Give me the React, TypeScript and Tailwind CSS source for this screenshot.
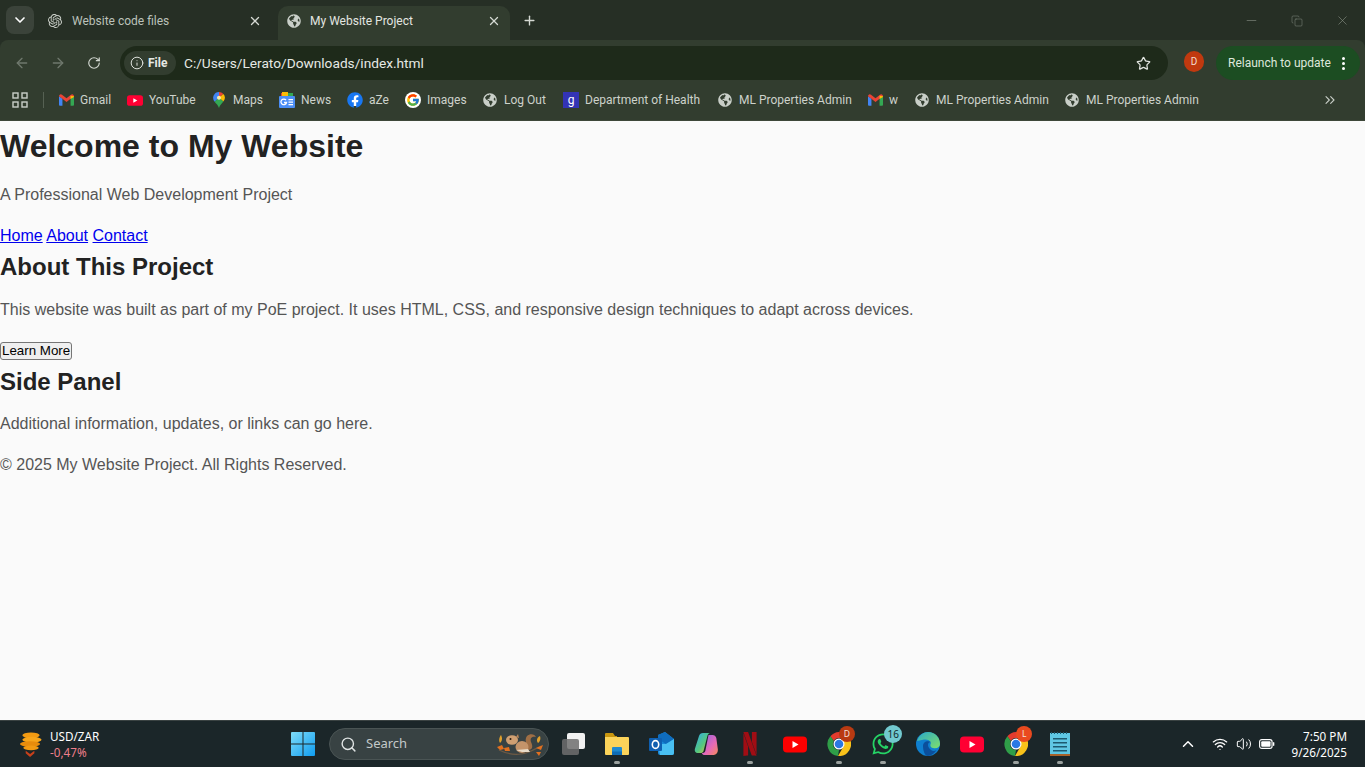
import { ArrowLeft, ArrowRight, ChevronDown, ChevronUp, ChevronsRight, Copy, Info, Minus, Plus, RotateCw, Search, Star, Volume2, Wifi, X } from 'lucide-react'
import { FaFacebook, FaGlobeAmericas, FaWhatsapp } from 'react-icons/fa'
import { FcGoogle } from 'react-icons/fc'
import { SiNetflix, SiOpenai } from 'react-icons/si'

const uiFont = "font-['Roboto',sans-serif]"

function GmailIcon() {
    return (
        <svg viewBox="0 0 24 18" className="h-[12px] w-[15px]">
            <path d="M0 3v13.500A1.500 1.500 0 0 0 1.500 18H5.500V7z" fill="#4285f4" />
            <path d="M24 3v13.500a1.500 1.500 0 0 1-1.500 1.500H18.500V7z" fill="#34a853" />
            <path d="M0 3a3 3 0 0 1 4.800-2.400L12 6l7.200-5.400A3 3 0 0 1 24 3l-5.500 4L12 12 5.500 7z" fill="#ea4335" />
            <path d="M18.500 2 24 3v1l-5.500 3.500z" fill="#fbbc04" />
        </svg>
    )
}

function YoutubeIcon({ w = 16, h = 11, color = '#ff0033' }: { w?: number; h?: number; color?: string }) {
    return (
        <svg width={w} height={h} viewBox="0 0 24 16">
            <rect width="24" height="16" rx="4" fill={color} />
            <path d="M9.500 4.500v7l6-3.500z" fill="#fff" />
        </svg>
    )
}

function MapsIcon() {
    return (
        <svg viewBox="0 0 16 22" className="h-[16px] w-[12px]">
            <path d="M8 0a8 8 0 0 0-6 13.300L8 8z" fill="#4285f4" />
            <path d="M8 0a8 8 0 0 1 6 2.700L8 8z" fill="#ea4335" />
            <path d="M14 2.700A8 8 0 0 1 14 13L8 8z" fill="#fbbc04" />
            <path d="M2 13.300 8 8l6 5c-2 3-5 5-6 9-1-4-4-6-6-8.700z" fill="#34a853" />
            <circle cx="8" cy="8" r="2.800" fill="#fbe9a8" />
        </svg>
    )
}

function NewsIcon() {
    return (
        <svg viewBox="0 0 16 16" className="size-4">
            <path d="M2 1h12v4H2z" fill="#ea4335" />
            <path d="M8 1h6v4H8z" fill="#34a853" />
            <path d="M3 0h6v4H3z" fill="#fbbc04" />
            <rect y="4" width="16" height="12" rx="1" fill="#4b8ef5" />
            <path d="M9.500 7H14v1.300H9.500zM9.500 9.500H14v1.300H9.500zM9.500 12H14v1.300H9.500z" fill="#fff" />
            <path d="M7 8.200A2.800 2.800 0 1 0 7.500 10.500H5" fill="none" stroke="#fff" strokeWidth="1.300" />
        </svg>
    )
}

function HealthIcon() {
    return (
        <span className="flex size-4 items-center justify-center bg-[#3333b5] text-[12px] leading-none text-white">g</span>
    )
}

function Globe() {
    return <FaGlobeAmericas className="size-[14px] text-[#c9cfc8]" />
}

function Bookmark({ icon, label, width }: { icon: React.ReactNode; label: string; width: number }) {
    return (
        <div className="flex h-4 items-center gap-1.5">
            <span className="flex size-4 items-center justify-center">{icon}</span>
            <span className="whitespace-nowrap text-[12px] leading-4 text-[#cdd2cb]" style={{ width }}>{label}</span>
        </div>
    )
}

function Tab({ active, icon, title }: { active?: boolean; icon: React.ReactNode; title: string }) {
    return (
        <div className={`flex h-[34px] items-center rounded-t-[10px] pb-[5px] ${active ? 'w-[232px] bg-[#323d2f] pr-[9px] pl-[8px] text-[#e3e6e1]' : 'w-[236px] pr-[10px] pl-[11px] text-[#bcc2ba]'}`}>
            <span className="flex size-4 items-center justify-center">{icon}</span>
            <span className={`flex-1 whitespace-nowrap text-[12px] ${active ? 'ml-[8px]' : 'ml-[9px]'}`}>{title}</span>
            <X className="size-[14px] text-[#d5d9d3]" strokeWidth={2.2} />
        </div>
    )
}

function ChromeIcon({ badge, badgeColor }: { badge: string; badgeColor: string }) {
    return (
        <span className="relative block size-6">
            <svg viewBox="0 0 24 24" className="size-6">
                <path d="M12 0a12 12 0 0 1 10.400 6H12a6 6 0 0 0-5.200 3L3.400 4.200A12 12 0 0 1 12 0z" fill="#e33b2e" />
                <path d="M22.400 6A12 12 0 0 1 11 24l5.200-9a6 6 0 0 0 0-6z" fill="#f9c21a" />
                <path d="M11 24A12 12 0 0 1 3.400 4.200L6.800 9a6 6 0 0 0 5.200 9z" fill="#2f9e48" />
                <circle cx="12" cy="12" r="5.500" fill="#fff" />
                <circle cx="12" cy="12" r="4.300" fill="#2b78e4" />
            </svg>
            <span className="absolute -top-[6px] -right-[4px] flex size-[16px] items-center justify-center rounded-full text-[8.500px] text-[#f4e3dc]" style={{ backgroundColor: badgeColor }}>{badge}</span>
        </span>
    )
}

function FolderIcon() {
    return (
        <svg viewBox="0 0 24 24" className="size-6">
            <path d="M0 2a1 1 0 0 1 1-1h7l2 3h2v3H0z" fill="#c9960f" />
            <path d="M0 5h23a1 1 0 0 1 1 1v16a1 1 0 0 1-1 1H1a1 1 0 0 1-1-1z" fill="#fbd35a" />
            <path d="M7 16a1 1 0 0 1 1-1h8a1 1 0 0 1 1 1v7H7z" fill="#1f8ad0" />
            <path d="M7 19.500h10V23H7z" fill="#0f6cb5" />
        </svg>
    )
}

function OutlookIcon() {
    return (
        <svg viewBox="0 0 26 24" className="h-[24px] w-[26px]">
            <path d="M9 3l7-3 9 7v14a2 2 0 0 1-2 2H11a2 2 0 0 1-2-2z" fill="#1a8ad8" />
            <path d="M16 0l9 7-8 5-8-5V3z" fill="#0f6cbd" />
            <path d="M9 12l8 0 8-5v14a2 2 0 0 1-2 2H11z" fill="#49c0f2" />
            <rect y="6" width="13" height="13" rx="1" fill="#0f5fb0" />
            <ellipse cx="6.500" cy="12.500" rx="3.200" ry="3.900" fill="none" stroke="#fff" strokeWidth="1.600" />
        </svg>
    )
}

function CopilotIcon() {
    return (
        <svg viewBox="0 0 24 24" className="size-6">
            <defs>
                <linearGradient id="cp1" x1="0" y1="0" x2="1" y2="1">
                    <stop offset="0" stopColor="#2fa9ee" />
                    <stop offset="0.55" stopColor="#55c77e" />
                    <stop offset="1" stopColor="#f7c63a" />
                </linearGradient>
                <linearGradient id="cp2" x1="0" y1="0" x2="1" y2="1">
                    <stop offset="0" stopColor="#8a63e8" />
                    <stop offset="0.6" stopColor="#e86ab5" />
                    <stop offset="1" stopColor="#f58a5a" />
                </linearGradient>
            </defs>
            <path d="M14.500 3h4c2 0 3.200 1 3.800 3l1.500 11c.5 3.500-1.500 6-4 6h-9c-1.500 0-2.500-.6-3-2 2 0 3-.5 3.500-2z" fill="url(#cp2)" />
            <path d="M9 1h7c-1 0-2 1-2.500 2.500L9.500 19c-.5 1.500-1.500 2-3 2H4c-2.500 0-3.800-2-3-4.500L5 4c.6-2 2-3 4-3z" fill="url(#cp1)" />
        </svg>
    )
}

function EdgeIcon() {
    return (
        <svg viewBox="0 0 24 24" className="size-6">
            <defs>
                <linearGradient id="ed1" x1="0" y1="0" x2="1" y2="1">
                    <stop offset="0" stopColor="#2aa8c8" />
                    <stop offset="1" stopColor="#7fe06a" />
                </linearGradient>
            </defs>
            <circle cx="12" cy="12" r="12" fill="#0f7fcf" />
            <path d="M1 9C3 3 8 0 12 0c7 0 12 5 12 12 0 3-3 5-7 4-3-.7-3-3-2-5-1-3-4-4-7-3.500C5 8 2 9 1 9z" fill="url(#ed1)" />
            <path d="M7 14c0-4 4-6 8-4-4 0-4 5 0 8 2 1.500 4 1 5.500 0A12 12 0 0 1 12 24c-3 0-5-5-5-10z" fill="#0b4f9c" />
        </svg>
    )
}

function NotepadIcon() {
    return (
        <svg viewBox="0 0 20 24" className="h-6 w-5">
            <rect y="1" width="20" height="21" fill="#5fc7e4" />
            <rect y="22" width="20" height="2" fill="#a8622a" />
            <path d="M1 0h1v2H1zM4 0h1v2H4zM7 0h1v2H7zM10 0h1v2h-1zM13 0h1v2h-1zM16 0h1v2h-1z" fill="#1d5a70" />
            <path d="M3 6h14v1.500H3zM3 10h14v1.500H3zM3 14h14v1.500H3zM3 18h14v1.500H3z" fill="#1d5a70" />
        </svg>
    )
}

function TaskIcon({ children, running }: { children: React.ReactNode; running?: boolean }) {
    return (
        <div className="relative flex h-[47px] w-[44.3px] shrink-0 items-center justify-center">
            {children}
            {running && <span className="absolute bottom-[4px] left-1/2 h-[3px] w-[6px] -translate-x-1/2 rounded-full bg-[#9aa09e]" />}
        </div>
    )
}

function SquirrelArt() {
    return (
        <svg viewBox="0 0 50 26" className="h-[26px] w-[50px]">
            <path d="M4 19c8 4 14 5 22 4 8-1 14-5 20-8" fill="none" stroke="#6e5a44" strokeWidth="1.200" />
            <path d="M33 19c5 0 5-4 3-8-1-3 0-6 5-5-1-3-6-4-9-1-3 4 0 9 0 14z" fill="#a06f45" />
            <ellipse cx="27" cy="16" rx="6.500" ry="6" fill="#c4946a" />
            <path d="M21 19l6 2 8 0-2-3z" fill="#e9dcc9" />
            <ellipse cx="17" cy="9" rx="6" ry="4.800" fill="#cf9f72" />
            <circle cx="15.500" cy="8" r="1" fill="#2a1b10" />
            <path d="M21 6l2-3 1 4z" fill="#b98558" />
            <path d="M5 12c-2-3 0-7 1-8 1 2 2 5-1 8zM43 12c-2-2-1-6 2-7 1 3 0 6-2 7z" fill="#e0a02c" />
            <path d="M2 16l5-2 2 4-4 1zM9 17l5-1 1 4-5 0zM41 17l7-3-2 5zM41 21l5 0-2 4z" fill="#e2701f" />
        </svg>
    )
}

function CurrencyIcon() {
    return (
        <svg viewBox="0 0 24 26" className="h-[25px] w-[24px]">
            <ellipse cx="12" cy="3.500" rx="9" ry="3" fill="#f29a12" />
            <ellipse cx="13" cy="8" rx="10" ry="3" fill="#f7a51b" />
            <ellipse cx="11" cy="12.500" rx="10.500" ry="3" fill="#e88c0c" />
            <ellipse cx="12" cy="16.500" rx="8" ry="2.500" fill="#f29a12" />
            <path d="M6.500 19.500 11 23l4.500-3.500v2.500L11 26l-4.500-4z" fill="#c8401a" />
        </svg>
    )
}

function TabStrip() {
    return (
        <div className="flex h-10 shrink-0 items-end bg-[#262f25]">
            <div className="mb-1.5 ml-1.5 flex size-7 items-center justify-center rounded-lg bg-[#3b433a]">
                <ChevronDown className="size-4 text-white" strokeWidth={2.5} />
            </div>
            <div className="ml-[2px]">
                <Tab icon={<SiOpenai className="size-[14px] text-[#cdd2cb]" />} title="Website code files" />
            </div>
            <div className="ml-[6px]">
                <Tab active icon={<Globe />} title="My Website Project" />
            </div>
            <Plus className="mb-[12px] ml-[12px] size-[15px] text-[#d5d9d3]" strokeWidth={2.2} />
            <div className="mb-3 ml-auto flex items-center gap-[32px] pr-[15px] text-[#868e84]">
                <Minus className="size-[15px]" strokeWidth={1} />
                <Copy className="size-[12px]" strokeWidth={1} />
                <X className="size-[15px]" strokeWidth={1} />
            </div>
        </div>
    )
}

function Toolbar() {
    return (
        <div className="flex h-10 shrink-0 items-end rounded-t-lg bg-[#323d2f]">
            <div className="flex h-[34px] w-[120px] items-center pl-[14px]">
                <ArrowLeft className="size-4 text-[#6f786d]" strokeWidth={2} />
                <ArrowRight className="ml-[20px] size-4 text-[#6f786d]" strokeWidth={2} />
                <RotateCw className="ml-[21px] size-[14px] text-[#d3d8d1]" strokeWidth={2} />
            </div>
            <div className="flex h-[34px] w-[1048px] items-center rounded-full bg-[#1e2a1a] pr-[16px] pl-1">
                <div className="flex h-6 w-[52px] items-center gap-1 rounded-full bg-[#323d2f] pl-[6px]">
                    <Info className="size-[14px] text-[#dfe3dd]" strokeWidth={1.7} />
                    <span className="text-[12px] font-bold text-[#e6e9e4]">File</span>
                </div>
                <span className="ml-2 flex-1 text-[13.700px] text-[#e6e9e4]">C:/Users/Lerato/Downloads/index.html</span>
                <Star className="mr-px size-[15px] text-[#e1e4df]" strokeWidth={2} />
            </div>
            <div className="mb-[8px] ml-[16px] flex h-[21px] w-5 items-center justify-center rounded-full bg-[#c0390f] text-[10px] text-[#f3ddd2]">D</div>
            <div className="ml-[12px] flex h-[34px] w-[144px] items-center rounded-full bg-[#1c4d22] pl-3 text-[12px] whitespace-nowrap text-[#dfe8dc]">
                Relaunch to update
                <span className="ml-[11px] flex flex-col gap-[2px]">
                    <span className="size-[3px] rounded-full bg-white" />
                    <span className="size-[3px] rounded-full bg-white" />
                    <span className="size-[3px] rounded-full bg-white" />
                </span>
            </div>
        </div>
    )
}

function BookmarksBar() {
    return (
        <div className="flex h-[41px] shrink-0 items-center border-b border-[#3d4739] bg-[#323d2f] pl-3">
            <svg viewBox="0 0 16 16" className="size-4 text-[#c9cfc8]" fill="none" stroke="currentColor" strokeWidth="1.400">
                <rect x="1" y="1" width="5" height="5" />
                <rect x="10" y="1" width="5" height="5" />
                <rect x="1" y="10" width="5" height="5" />
                <rect x="10" y="10" width="5" height="5" />
            </svg>
            <span className="mr-[14px] ml-[15px] h-4 w-px bg-[#566153]" />
            <div className="flex items-center gap-4">
                <Bookmark icon={<GmailIcon />} label="Gmail" width={31} />
                <Bookmark icon={<YoutubeIcon />} label="YouTube" width={46} />
                <Bookmark icon={<MapsIcon />} label="Maps" width={30} />
                <Bookmark icon={<NewsIcon />} label="News" width={30} />
                <Bookmark icon={<FaFacebook className="size-4 text-[#1877f2]" style={{ background: 'radial-gradient(circle, #fff 55%, transparent 56%)' }} />} label="aZe" width={20} />
                <Bookmark icon={<FcGoogle className="size-4 rounded-full bg-white p-px" />} label="Images" width={39} />
                <Bookmark icon={<Globe />} label="Log Out" width={43} />
                <Bookmark icon={<HealthIcon />} label="Department of Health" width={116} />
                <Bookmark icon={<Globe />} label="ML Properties Admin" width={112} />
                <Bookmark icon={<GmailIcon />} label="w" width={9} />
                <Bookmark icon={<Globe />} label="ML Properties Admin" width={112} />
                <Bookmark icon={<Globe />} label="ML Properties Admin" width={112} />
            </div>
            <ChevronsRight className="mr-[27px] ml-auto size-4 text-[#c9cfc8]" strokeWidth={1.6} />
        </div>
    )
}

function PageContent() {
    return (
        <main className="min-h-0 flex-1 bg-[#fafafa] font-['Liberation_Sans',Arial,sans-serif] text-[16px] leading-[1.6] text-[#555]">
            <h1 className="mb-[10px] text-[32px] leading-[1.6] font-bold text-[#222]">Welcome to My Website</h1>
            <p className="mb-[15px]">A Professional Web Development Project</p>
            <nav className="text-[#0000ee]">
                <a className="underline" href="#home">Home</a> <a className="underline" href="#about">About</a> <a className="underline" href="#contact">Contact</a>
            </nav>
            <h2 className="mb-[10px] text-[24px] leading-[1.6] font-bold text-[#222]">About This Project</h2>
            <p className="mb-[15px]">This website was built as part of my PoE project. It uses HTML, CSS, and responsive design techniques to adapt across devices.</p>
            <div>
                <button className="rounded-[3px] border border-[#767676] bg-[#efefef] px-px text-[13.330px] leading-[16px] text-black">Learn More</button>
            </div>
            <h2 className="mb-[10px] text-[24px] leading-[1.6] font-bold text-[#222]">Side Panel</h2>
            <p className="mb-[15px]">Additional information, updates, or links can go here.</p>
            <p>© 2025 My Website Project. All Rights Reserved.</p>
        </main>
    )
}

function Taskbar() {
    return (
        <footer className="flex h-[47px] shrink-0 items-center border-t border-[#3a4242] bg-[#1b2629] font-['Noto_Sans',sans-serif]">
            <div className="flex w-[288px] shrink-0 items-center pl-[19px]">
                <CurrencyIcon />
                <div className="ml-[7px] text-[11.700px] leading-[16px]">
                    <div className="text-white">USD/ZAR</div>
                    <div className="text-[#ef7f8c]">-0,47%</div>
                </div>
            </div>
            <svg viewBox="0 0 24 24" className="ml-[3px] size-6 shrink-0">
                <defs>
                    <linearGradient id="win" x1="0" y1="0" x2="1" y2="1">
                        <stop offset="0" stopColor="#7fdcf8" />
                        <stop offset="1" stopColor="#0f9cf0" />
                    </linearGradient>
                </defs>
                <path d="M0 1a1 1 0 0 1 1-1h10.500v11.500H0zM12.500 0H23a1 1 0 0 1 1 1v10.500H12.500zM0 12.500h11.500V24H1a1 1 0 0 1-1-1zM12.500 12.500H24V23a1 1 0 0 1-1 1H12.500z" fill="url(#win)" />
            </svg>
            <div className="ml-[14px] flex h-8 w-[220px] shrink-0 items-center rounded-full border border-[#4a5454] bg-[#384243] pl-[10px]">
                <Search className="size-[17px] text-[#dfe3e3]" strokeWidth={2} />
                <span className="ml-[9px] flex-1 text-[13px] text-[#c3c9c9]">Search</span>
                <span className="mr-[3px]"><SquirrelArt /></span>
            </div>
            <div className="ml-[2px] flex items-center">
                <TaskIcon>
                    <span className="relative block h-[22px] w-[23px]">
                        <span className="absolute top-0 right-0 h-4 w-[18px] rounded-[2px] bg-[#f1f1f1]" />
                        <span className="absolute bottom-0 left-0 h-4 w-[17px] rounded-[2px] bg-[#6f6f6f]/85" />
                    </span>
                </TaskIcon>
                <TaskIcon running><FolderIcon /></TaskIcon>
                <TaskIcon><OutlookIcon /></TaskIcon>
                <TaskIcon><CopilotIcon /></TaskIcon>
                <TaskIcon running><SiNetflix className="size-6 text-[#a10d14]" /></TaskIcon>
                <TaskIcon><YoutubeIcon w={24} h={17} color="#ff0000" /></TaskIcon>
                <TaskIcon running><ChromeIcon badge="D" badgeColor="#b93a12" /></TaskIcon>
                <TaskIcon running>
                    <span className="relative block size-6">
                        <FaWhatsapp className="size-6 text-[#25d366]" />
                        <span className="absolute -top-[7px] -right-[7px] flex size-[18px] items-center justify-center rounded-full bg-[#72c9cf] text-[10px] text-[#10282b]">16</span>
                    </span>
                </TaskIcon>
                <TaskIcon><EdgeIcon /></TaskIcon>
                <TaskIcon><YoutubeIcon w={24} h={17} color="#ff0033" /></TaskIcon>
                <TaskIcon running><ChromeIcon badge="L" badgeColor="#ea4a1f" /></TaskIcon>
                <TaskIcon running><NotepadIcon /></TaskIcon>
            </div>
            <div className="ml-auto flex items-center pr-[18px] text-white">
                <ChevronUp className="size-[18px]" strokeWidth={2} />
                <Wifi className="ml-[15px] size-4" strokeWidth={2} />
                <Volume2 className="ml-[8px] size-4" strokeWidth={1.5} />
                <svg viewBox="0 0 18 12" className="ml-[7px] h-[12px] w-[16px]" fill="none">
                    <rect x="0.700" y="1" width="14" height="10" rx="2.500" stroke="white" strokeWidth="1.300" />
                    <rect x="2.500" y="3" width="10.500" height="6" rx="1" fill="white" />
                    <path d="M16.500 4.500v3" stroke="white" strokeWidth="1.500" strokeLinecap="round" />
                </svg>
                <div className="ml-[17px] text-right text-[11.700px] leading-[16px]">
                    <div>7:50 PM</div>
                    <div>9/26/2025</div>
                </div>
            </div>
        </footer>
    )
}

export default function App() {
    return (
        <div className={`flex h-[767px] w-[1365px] flex-col overflow-hidden bg-[#262f25] ${uiFont}`}>
            <TabStrip />
            <Toolbar />
            <BookmarksBar />
            <PageContent />
            <Taskbar />
        </div>
    )
}
